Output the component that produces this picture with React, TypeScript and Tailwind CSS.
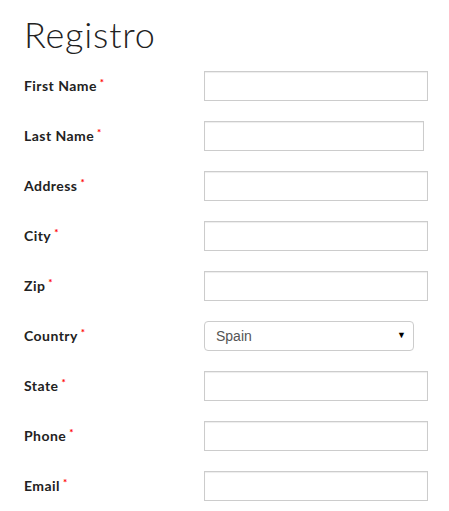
import React from 'react';

const fields = [
  { label: 'First Name', width: 'w-[224px]' },
  { label: 'Last Name', width: 'w-[220px]' },
  { label: 'Address', width: 'w-[224px]' },
  { label: 'City', width: 'w-[224px]' },
  { label: 'Zip', width: 'w-[224px]' },
  { label: 'Country', select: true },
  { label: 'State', width: 'w-[224px]' },
  { label: 'Phone', width: 'w-[224px]' },
  { label: 'Email', width: 'w-[224px]' },
];

export default function App() {
  return (
    <div className="w-[449px] h-[511px] bg-white pl-[24px] font-['Lato','Liberation_Sans',sans-serif] overflow-hidden">
      <h1 className="pt-[16px] mb-[9px] text-[36px] leading-[36px] font-light tracking-[0.8px] text-[#222]">Registro</h1>

      <form className="flex flex-col">
        {fields.map((f) => (
          <div key={f.label} className="flex items-center h-[50px]">
            <label className="w-[180px] pb-[2px] text-[14px] font-bold text-[#222] tracking-[0.45px]">
              {f.label}
              <sup className="ml-[3px] text-[10px] text-[#ff0000]">*</sup>
            </label>
            {f.select ? (
              <div className="relative w-[210px] h-[30px]">
                <select
                  defaultValue="Spain"
                  className="appearance-none w-full h-full border border-[#ccc] rounded-[4px] bg-white pl-[11px] text-[14px] text-[#555] font-['Liberation_Sans',sans-serif] outline-none"
                >
                  <option>Spain</option>
                </select>
                <span className="absolute right-[8px] top-[8px] text-[9px] leading-[12px] text-black pointer-events-none">▼</span>
              </div>
            ) : (
              <input
                type="text"
                className={`${f.width} h-[30px] border border-[#ccc] bg-white shadow-[inset_0_1px_1px_rgba(0,0,0,0.075)] outline-none`}
              />
            )}
          </div>
        ))}
      </form>
    </div>
  );
}
